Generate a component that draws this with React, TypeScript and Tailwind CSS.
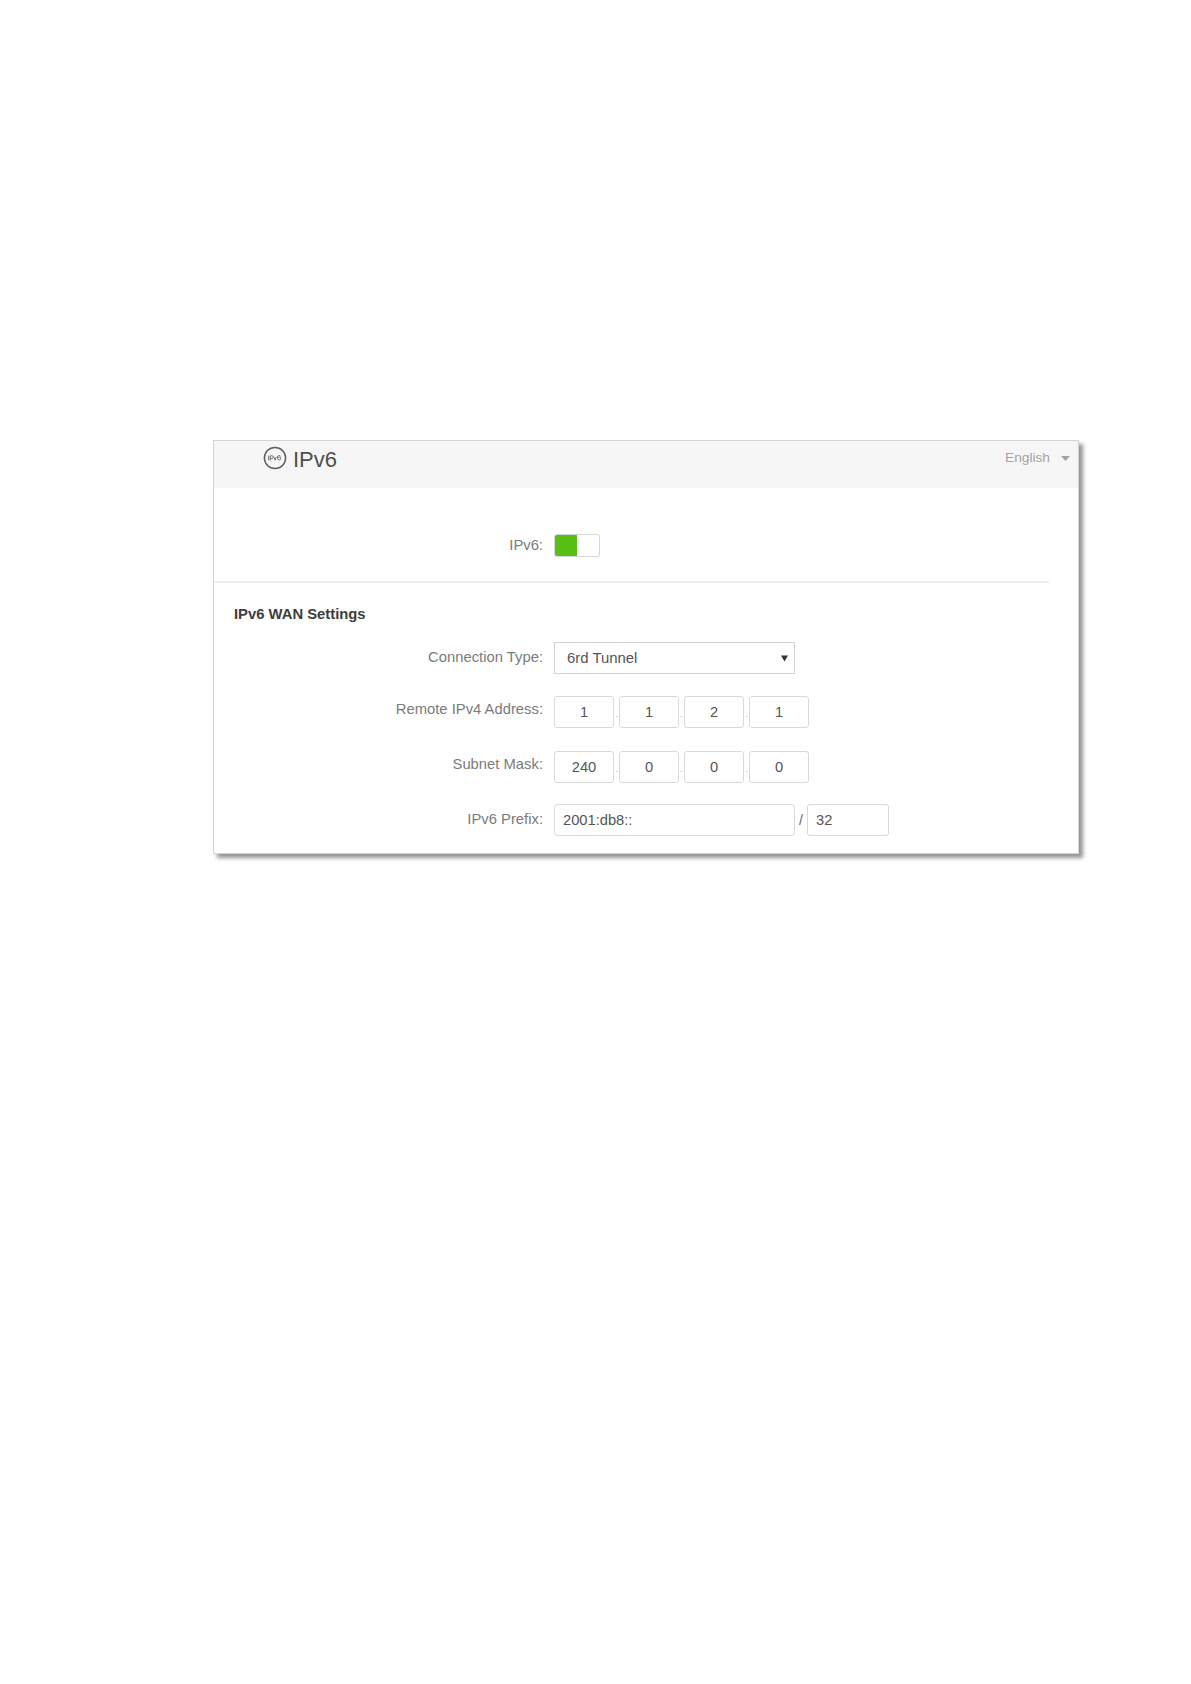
import React from "react";

const box = "h-[32px] flex items-center border border-[#d9d9d9] rounded-[3px] bg-white text-[14.7px] text-[#555]";

function Row({ label, className, labelClass, children }: { label: string; className: string; labelClass: string; children: React.ReactNode }) {
  return (
    <div className={`flex items-start ${className}`}>
      <div className={`w-[329px] text-right text-[14.8px] text-[#7b7b7b] ${labelClass}`}>{label}</div>
      <div className="ml-[11px] flex items-center">{children}</div>
    </div>
  );
}

function Ip({ values }: { values: string[] }) {
  return (
    <>
      {values.map((v, i) => (
        <React.Fragment key={i}>
          <div className={`${box} w-[60px] justify-center`}>{v}</div>
          {i < 3 && (
            <div className="w-[5px] flex justify-center self-end pb-[9px] text-[9px] leading-none text-[#aaa]">.</div>
          )}
        </React.Fragment>
      ))}
    </>
  );
}

export default function App() {
  return (
    <div className="min-h-[1684px] bg-white pt-[440px] pl-[213px] font-['Liberation_Sans',Arial,sans-serif]">
      <div className="w-[866px] h-[414px] border border-[#d4d4d4] bg-white shadow-[4px_4px_4px_rgba(0,0,0,0.42)]">
        <div className="h-[47px] bg-[#f6f6f6] flex items-start justify-between">
          <div className="flex items-start ml-[49px] mt-[5px]">
            <svg width="24" height="24" viewBox="0 0 24 24" className="shrink-0">
              <circle cx="12" cy="12" r="10.6" fill="none" stroke="#5f5f5f" strokeWidth="1.5" />
              <rect x="5.2" y="9.6" width="1" height="4.8" fill="#666" />
              <path d="M7.3 14.4V9.8h1.6a1.3 1.3 0 0 1 0 2.7H7.3" fill="none" stroke="#666" strokeWidth="0.9" />
              <path d="M10.9 10.8l1.2 3.4 1.2-3.4" fill="none" stroke="#666" strokeWidth="0.9" />
              <path d="M17.6 10.4a1.6 1.6 0 0 0-2.9 1.4v.8a1.5 1.5 0 1 0 3-.3 1.5 1.5 0 0 0-3 0" fill="none" stroke="#666" strokeWidth="0.9" />
            </svg>
            <span className="ml-[6px] mt-[2px] text-[22px] leading-[24px] text-[#4f4f4f]">IPv6</span>
          </div>
          <div className="flex items-center mt-[8px] mr-[8px] text-[13.7px] leading-[18px] text-[#a3a3a3]">
            <span>English</span>
            <svg width="9" height="5" viewBox="0 0 9 5" className="ml-[11px]">
              <path d="M0 0h9L4.5 5z" fill="#a3a3a3" />
            </svg>
          </div>
        </div>

        <Row label="IPv6:" className="mt-[46px] h-[23px]" labelClass="leading-[23px]">
          <div className="w-[46px] h-[23px] border border-[#d3d8dc] rounded-[3px] bg-white flex overflow-hidden">
            <div className="w-[22px] bg-[#58bf15]" />
          </div>
        </Row>

        <div className="mt-[24px] w-[835px] h-[2px] bg-[#ebeff3]" />

        <div className="mt-[22px] ml-[20px] text-[14.8px] leading-[18px] font-bold text-[#3d3d3d]">IPv6 WAN Settings</div>

        <Row label="Connection Type:" className="mt-[19px]" labelClass="leading-[30px]">
          <div className="w-[241px] h-[32px] flex items-center justify-between border border-[#d4d4d4] bg-white pl-[12px] pr-[6px] text-[14.9px] text-[#555]">
            <span>6rd Tunnel</span>
            <svg width="7" height="7" viewBox="0 0 7 7"><path d="M0 0.5h7L3.5 6.5z" fill="#333" /></svg>
          </div>
        </Row>

        <Row label="Remote IPv4 Address:" className="mt-[22px]" labelClass="leading-[27px]">
          <Ip values={["1", "1", "2", "1"]} />
        </Row>

        <Row label="Subnet Mask:" className="mt-[23px]" labelClass="leading-[26px]">
          <Ip values={["240", "0", "0", "0"]} />
        </Row>

        <Row label="IPv6 Prefix:" className="mt-[21px]" labelClass="leading-[30px]">
          <div className={`${box} w-[241px] pl-[8px]`}>2001:db8::</div>
          <div className="w-[12px] text-center text-[14px] text-[#666]">/</div>
          <div className={`${box} w-[82px] pl-[8px]`}>32</div>
        </Row>
      </div>
    </div>
  );
}
